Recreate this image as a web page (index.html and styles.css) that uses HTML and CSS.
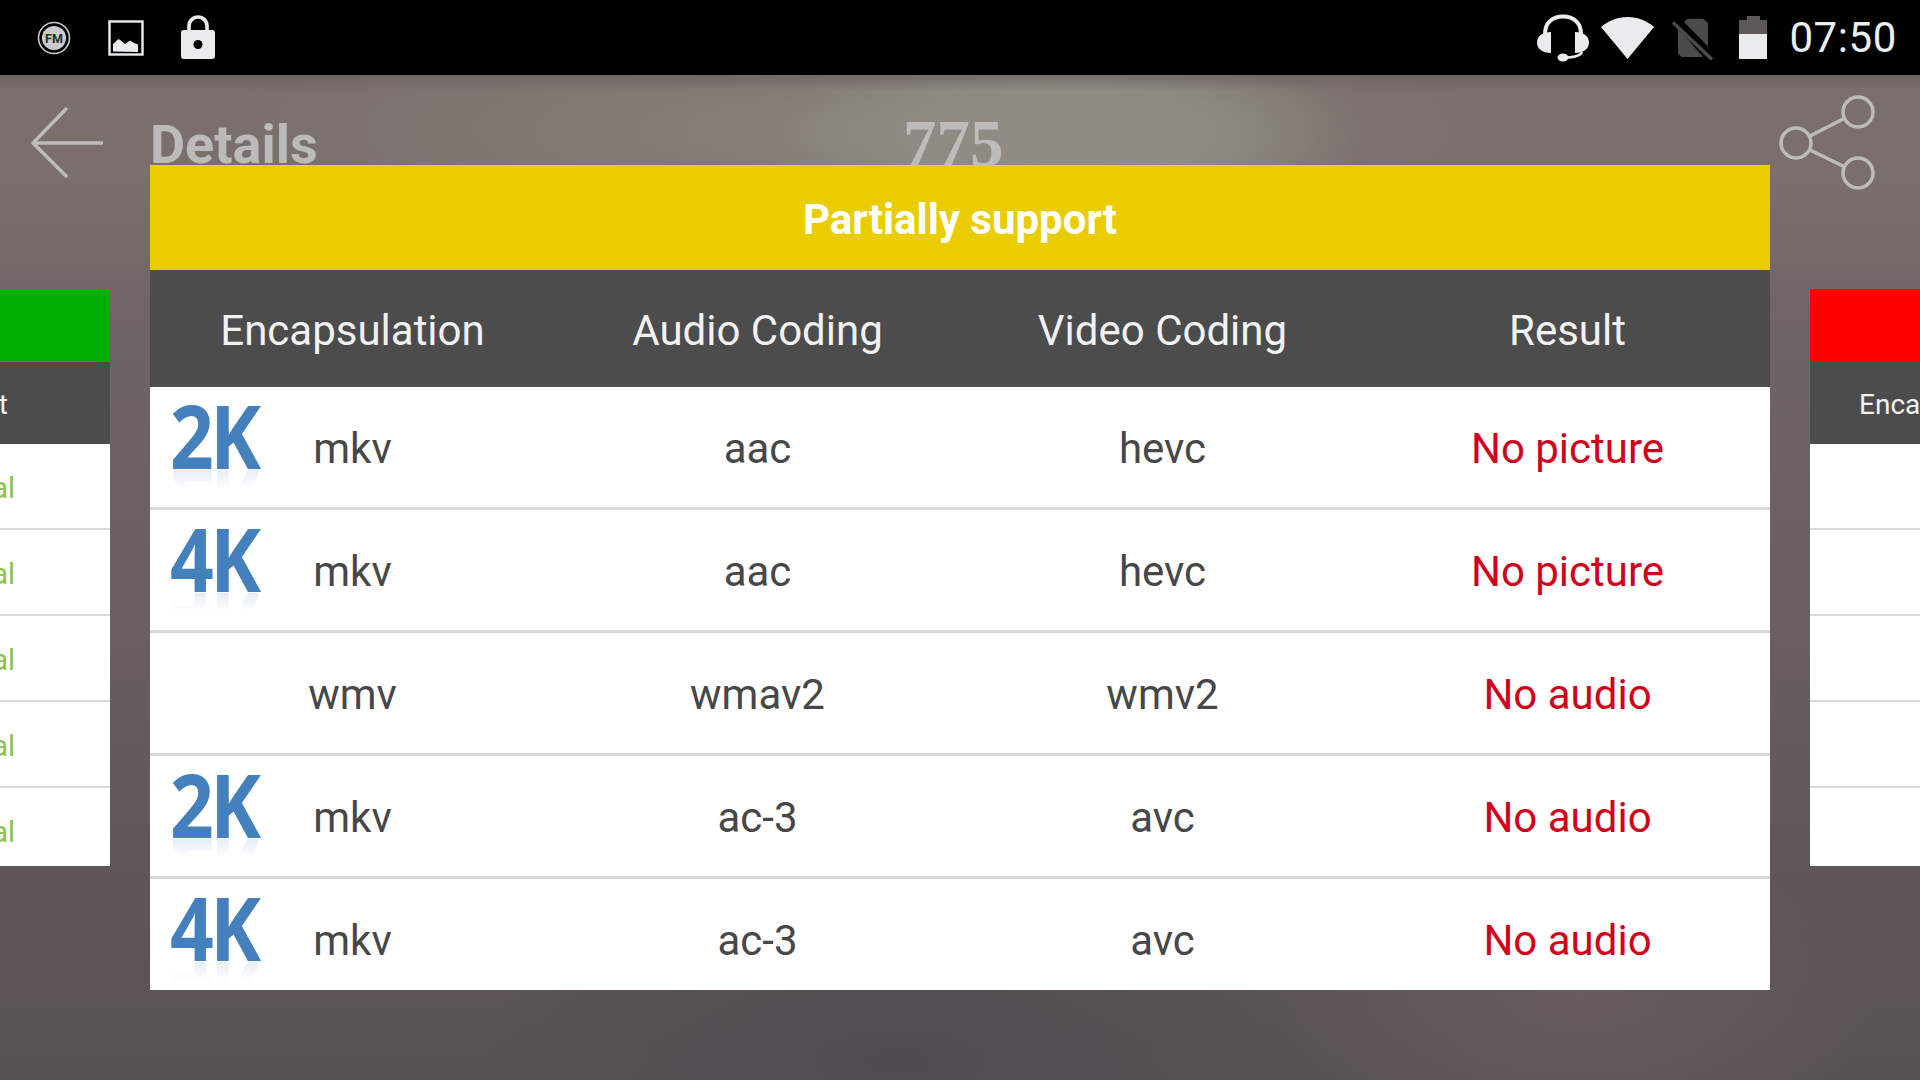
FILE: index.html
```html
<!DOCTYPE html>
<html lang="en">
<head>
<meta charset="utf-8">
<title>Details</title>
<link rel="stylesheet" href="styles.css">
</head>
<body>
<div class="screen">
  <header class="status">
    <div class="status-left">
      <svg class="ico" viewBox="0 0 36 36"><circle cx="18" cy="18" r="15.5" fill="none" stroke="#c9cbce" stroke-width="1.6"/><circle cx="18" cy="18" r="12" fill="#c9cbce"/><text x="18" y="22.500" class="fm">FM</text></svg>
      <svg class="ico" viewBox="0 0 36 36"><rect x="1.5" y="1.5" width="33" height="33" fill="none" stroke="#e9ebed" stroke-width="2.4"/><path d="M5 31.500V24l5.500-5 3 2 3.500 3 5-3.500 3 2 5 2v7.500z" fill="#e9ebed"/></svg>
      <svg class="ico lock" viewBox="0 0 36 46"><path d="M9 20V12a9 9 0 0 1 18 0v8" fill="none" stroke="#e9ebed" stroke-width="3.600"/><rect x="1" y="16" width="34" height="29" rx="3" fill="#e9ebed"/><circle cx="18" cy="30.500" r="4.500" fill="#000"/></svg>
    </div>
    <div class="status-right">
      <svg class="ico head" viewBox="0 0 56 48"><path d="M10 20C10 9 17 2.500 28 2.500S46 9 46 20" fill="none" stroke="#e9ebed" stroke-width="4"/><path d="M16 18v21C8 39 2 35 2 28.500S8 18 16 18zM40 18v21c8 0 14-4 14-10.500S48 18 40 18z" fill="#e9ebed"/><path d="M47 38c-1 3-7 5.500-19 5.500" fill="none" stroke="#e9ebed" stroke-width="2.400"/><ellipse cx="28" cy="43.500" rx="5.500" ry="4" fill="#e9ebed"/></svg>
      <svg class="ico wifi" viewBox="0 0 55 44"><path d="M1 11C8 5 17 1 27.500 1S47 5 54 11L27.500 43z" fill="#e9ebed"/></svg>
      <svg class="ico sim" viewBox="0 0 44 44"><path d="M14 6l4-3.200h15L38 7v23.500zM8 12l25 29H12l-4-3z" fill="#4b4b4b"/><path d="M3 6.500l39 37" stroke="#4b4b4b" stroke-width="3.500"/></svg>
      <svg class="ico batt" viewBox="0 0 30 44"><path d="M9 0h13v4h7v14H1V4h8z" fill="#5f5858"/><rect x="1" y="18" width="28" height="25" fill="#e9ebed"/></svg>
      <span class="clock">07:50</span>
    </div>
  </header>

  <main class="app">
    <div class="appbar">
      <svg class="back" viewBox="0 0 72 72"><path d="M35 2L2 36l33 33M2 36h69" fill="none" stroke="#bcbcbc" stroke-width="3.500" stroke-linecap="round" stroke-linejoin="round"/></svg>
      <h1 class="title">Details</h1>
      <span class="num">775</span>
      <svg class="share" viewBox="0 0 100 100"><g fill="none" stroke="#bcbcbc" stroke-width="3.500"><circle cx="18" cy="50" r="15"/><circle cx="80" cy="19" r="15"/><circle cx="80" cy="80" r="15"/><path d="M32 43l35-18M32 57l35 17"/></g></svg>
    </div>

    <div class="pager">
      <section class="card card-left">
        <div class="card-bar green"></div>
        <div class="card-head"><span>Result</span></div>
        <div class="card-row"><span>Normal</span></div>
        <div class="card-row"><span>Normal</span></div>
        <div class="card-row"><span>Normal</span></div>
        <div class="card-row"><span>Normal</span></div>
        <div class="card-row last"><span>Normal</span></div>
      </section>
      <section class="card card-right">
        <div class="card-bar red"></div>
        <div class="card-head"><span>Encapsulation</span></div>
        <div class="card-row"></div>
        <div class="card-row"></div>
        <div class="card-row"></div>
        <div class="card-row"></div>
        <div class="card-row last"></div>
      </section>
    </div>

    <div class="dialog">
      <div class="dialog-title">Partially support</div>
      <div class="grid grid-head">
        <div>Encapsulation</div><div>Audio Coding</div><div>Video Coding</div><div>Result</div>
      </div>
      <div class="grid row">
        <span class="res">2K</span>
        <div>mkv</div><div>aac</div><div>hevc</div><div class="bad">No picture</div>
      </div>
      <div class="grid row">
        <span class="res">4K</span>
        <div>mkv</div><div>aac</div><div>hevc</div><div class="bad">No picture</div>
      </div>
      <div class="grid row">
        <div>wmv</div><div>wmav2</div><div>wmv2</div><div class="bad">No audio</div>
      </div>
      <div class="grid row">
        <span class="res">2K</span>
        <div>mkv</div><div>ac-3</div><div>avc</div><div class="bad">No audio</div>
      </div>
      <div class="grid row row-last">
        <span class="res">4K</span>
        <div>mkv</div><div>ac-3</div><div>avc</div><div class="bad">No audio</div>
      </div>
    </div>
  </main>
</div>
</body>
</html>
```
FILE: styles.css
```css
* { box-sizing: border-box; margin: 0; padding: 0; }
html, body { width: 1920px; height: 1080px; overflow: hidden; background: #000; }
body { font-family: Roboto, "Liberation Sans", sans-serif; color: #444; }

.screen { width: 1920px; height: 1080px; display: flex; flex-direction: column; }

/* status bar */
.status { height: 75px; flex: none; background: #000; display: flex; justify-content: space-between; align-items: center; padding: 0 23px 0 36px; }
.status-left { display: flex; align-items: center; gap: 36px; }
.status-right { display: flex; align-items: center; }
.ico { display: block; width: 36px; height: 36px; flex: none; }
.lock { height: 46px; margin-top: -2px; }
.fm { font: 700 12.500px Roboto, sans-serif; fill: #2b2b2b; text-anchor: middle; }
.head { width: 56px; height: 48px; margin-right: 9px; }
.wifi { width: 55px; height: 44px; margin-right: 15px; }
.sim { width: 44px; height: 44px; margin-right: 24px; }
.batt { width: 30px; height: 44px; margin-right: 21px; }
.clock { font-size: 42px; line-height: 75px; color: #eceff1; letter-spacing: .6px; }

/* background activity */
.app {
  position: relative; flex: 1; overflow: hidden;
  background:
    linear-gradient(180deg, rgba(100,90,90,.55) 0, rgba(100,90,90,0) 16px),
    radial-gradient(ellipse 300px 100px at 1060px 60px, #918d85 0%, #8f8b84 50%, rgba(142,138,132,0) 100%),
    radial-gradient(ellipse 620px 130px at 860px 55px, rgba(138,131,125,.9) 0%, rgba(138,131,125,0) 100%),
    radial-gradient(ellipse 420px 170px at 900px 985px, #4f4c50 0%, rgba(79,76,80,0) 100%),
    radial-gradient(ellipse 300px 160px at 1580px 920px, #685c5d 0%, rgba(104,92,93,0) 100%),
    linear-gradient(180deg, #7a6f6c 0%, #7a6f6c 10%, #6f6464 26%, #6a5e5f 55%, #5f5657 78%, #595254 100%);
}
.appbar { position: relative; height: 214px; display: flex; align-items: flex-start; }
.back { width: 72px; height: 72px; margin: 32px 0 0 31px; flex: none; }
.title { font-size: 54px; font-weight: 700; line-height: 64px; color: #bbb; margin: 38px 0 0 47px; }
.num { position: absolute; left: 903px; top: 26px; font: 700 67px/84px "Liberation Serif", serif; color: #bcbcbc; }
.share { position: absolute; left: 1778px; top: 18px; width: 100px; height: 100px; }

.pager { display: flex; justify-content: space-between; }
.card { width: 110px; background: #fff; }
.card-bar { height: 73px; }
.green { background: #00b000; }
.red { background: #f00; }
.card-head { height: 82px; padding-top: 2px; background: #4c4c4c; color: #f2f2f2; font-size: 28px; display: flex; align-items: center; white-space: nowrap; }
.card-row { height: 86px; padding-top: 3px; border-bottom: 2px solid #d8d8d8; color: #8bc34a; font-size: 29px; display: flex; align-items: center; white-space: nowrap; }
.card-row.last { height: 78px; padding-top: 9px; border-bottom: 0; }
.card-left .card-head { justify-content: flex-end; padding-right: 102px; }
.card-left .card-row { justify-content: flex-end; padding-right: 95px; }
.card-right .card-head { padding-left: 49px; overflow: hidden; }

/* dialog */
.dialog { position: absolute; left: 150px; top: 90px; width: 1620px; height: 825px; overflow: hidden; background: #fff; display: flex; flex-direction: column; }
.dialog-title { height: 105px; flex: none; padding-top: 4px; background: #eacd00; color: #fff; font-size: 42px; font-weight: 700; display: flex; align-items: center; justify-content: center; }
.grid { display: grid; grid-template-columns: repeat(4, 1fr); text-align: center; align-items: center; font-size: 42px; }
.grid-head { height: 117px; flex: none; padding-top: 4px; background: #4c4c4c; color: #f2f2f2; }
.row { position: relative; height: 123px; flex: none; padding-top: 3px; border-bottom: 3px solid #d8d8d8; color: #474747; }
.row-last { padding-top: 0; border-bottom: 0; }
.bad { color: #d0021b; }
.res {
  position: absolute; left: 20px; top: 15px; width: 100px; height: 67px;
  font: 700 87px/67px "Open Sans", sans-serif; color: #4480bb; letter-spacing: -4px;
  text-align: left; transform: scaleX(.88); transform-origin: left center;
  -webkit-box-reflect: below 1px linear-gradient(transparent 72%, rgba(0,0,0,.14));
}
```
